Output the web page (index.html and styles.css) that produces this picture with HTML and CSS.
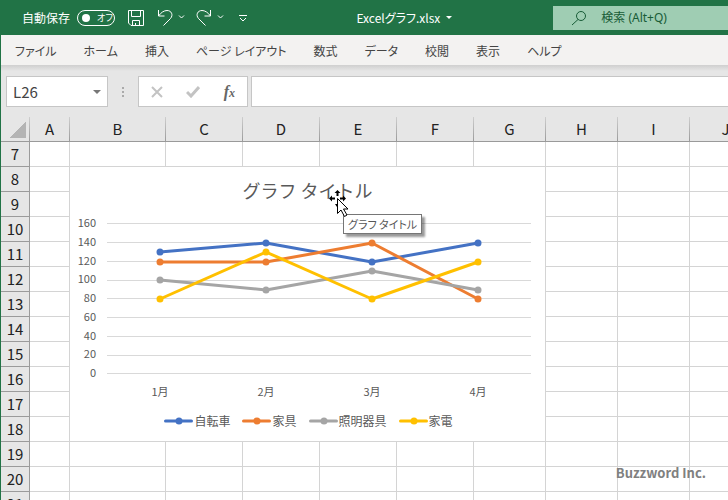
FILE: index.html
```html
<!DOCTYPE html>
<html lang="ja">
<head>
    <meta charset="UTF-8">
    <meta name="viewport" content="width=device-width, initial-scale=1.0">
    <title>Excelグラフ.xlsx</title>
    <link rel="stylesheet" href="styles.css">
</head>
<body>
    <header class="title-bar">
        <div class="quick-access">
            <label class="autosave">
                <span>自動保存</span>
                <input type="checkbox" class="autosave-input">
                <span class="switch"><span class="knob"></span>オフ</span>
            </label>
            <button class="save" aria-label="上書き保存">
                <svg width="16" height="16" viewBox="0 0 16 16"><path d="M.5.5h15v15H3L.5 13zM3.5.5v6h9v-6M4.5 15.5v-5h7v5M7.5 13v2"/></svg>
            </button>
            <button class="undo" aria-label="元に戻す">
                <svg width="28" height="18" viewBox="0 0 28 18"><path d="M1.5 1v6h6M1.5 7C4 3.5 7 1.5 10 1.5c4.5 0 6.5 4.5 3.5 8L6.5 16.5"/><path d="M22 6.5l2.5 2.5L27 6.5"/></svg>
            </button>
            <button class="redo" aria-label="やり直し">
                <svg width="28" height="18" viewBox="0 0 28 18"><path d="M14.5 1v6h-6M14.5 7C12 3.5 9 1.5 6 1.5c-4.5 0-6.5 4.5-3.5 8L9.5 16.5"/><path d="M22 6.5l2.5 2.5L27 6.5"/></svg>
            </button>
            <button class="more" aria-label="クイック アクセス ツール バーのユーザー設定">
                <svg width="8" height="8" viewBox="0 0 8 8"><path d="M0 1.5h8M1 4l3 3 3-3"/></svg>
            </button>
        </div>
        <button class="file-name">Excelグラフ.xlsx<span class="arrow-down"></span></button>
        <label class="search">
            <svg width="16" height="16" viewBox="0 0 16 16"><circle cx="10" cy="6" r="4.5"/><path d="M7 9.5L1 15"/></svg>
            <input type="text" placeholder="検索 (Alt+Q)">
        </label>
    </header>
    <nav class="tabs">
        <a href="#">ファイル</a>
        <a href="#">ホーム</a>
        <a href="#">挿入</a>
        <a href="#">ページ レイアウト</a>
        <a href="#">数式</a>
        <a href="#">データ</a>
        <a href="#">校閲</a>
        <a href="#">表示</a>
        <a href="#">ヘルプ</a>
    </nav>
    <div class="formula-bar">
        <div class="name-box">
            <input type="text" value="L26" aria-label="名前ボックス">
            <button aria-label="名前の一覧"><span class="arrow-down"></span></button>
        </div>
        <div class="grip"><i></i><i></i><i></i></div>
        <div class="formula-buttons">
            <button aria-label="キャンセル"><svg width="12" height="12" viewBox="0 0 12 12"><path d="M1 1l10 10M11 1L1 11"/></svg></button>
            <button aria-label="入力"><svg width="14" height="12" viewBox="0 0 14 12"><path class="check" d="M1 6l4 4 8-9"/></svg></button>
            <button aria-label="関数の挿入" class="fx">f<small>x</small></button>
        </div>
        <input type="text" class="formula-input" aria-label="数式バー">
    </div>
    <main class="sheet">
        <table class="grid">
            <colgroup>
                <col class="col-head"><col class="col-a"><col class="col-b">
                <col class="col-mid"><col class="col-mid"><col class="col-mid"><col class="col-mid">
                <col class="col-std"><col class="col-std"><col class="col-std"><col class="col-std">
            </colgroup>
            <thead>
                <tr><th class="corner"></th><th>A</th><th>B</th><th>C</th><th>D</th><th>E</th><th>F</th><th>G</th><th>H</th><th>I</th><th>J</th></tr>
            </thead>
            <tbody id="rows"></tbody>
        </table>

        <section class="chart">
            <h2 class="chart-title">グラフ タイトル</h2>
            <svg class="plot" viewBox="0 0 475 190" role="img" aria-label="折れ線グラフ">
                <path class="lines" d="M37 16.5h424M37 35.5h424M37 54.5h424M37 73.5h424M37 91.5h424M37 110.5h424M37 129.5h424M37 148.5h424M37 166.5h424"/>
                <g class="y-axis">
                    <text x="26" y="20">160</text>
                    <text x="26" y="39">140</text>
                    <text x="26" y="58">120</text>
                    <text x="26" y="76">100</text>
                    <text x="26" y="95">80</text>
                    <text x="26" y="114">60</text>
                    <text x="26" y="133">40</text>
                    <text x="26" y="151">20</text>
                    <text x="26" y="170">0</text>
                </g>
                <g class="x-axis">
                    <text x="90" y="189">1月</text>
                    <text x="196" y="189">2月</text>
                    <text x="302" y="189">3月</text>
                    <text x="408" y="189">4月</text>
                </g>
                <g id="series"></g>
            </svg>
            <ul class="legend" id="legend"></ul>
        </section>

        <div class="tooltip" role="tooltip">グラフ タイトル</div>
        <svg class="cursor" width="20" height="28" viewBox="0 0 20 28">
            <path d="M8.5 0L11.5 3H9.5v3h-2V3h-2zM0 8.500L3 5.5v2h3v2H3v2zM17 8.500L14 5.5v2h-3v2h3v2zM6 14h2v3z"/>
            <path class="pointer" d="M8.5 8.5v15l3.5-3.5 3.5 6.5 2.5-1.5-3.500-6h4.500z"/>
        </svg>
        <p class="credit">Buzzword Inc.</p>
    </main>
    <script>
        var series = [
            { name: '自転車', color: '#4472c4', values: [130, 140, 120, 140] },
            { name: '家具', color: '#ed7d31', values: [120, 120, 140, 80] },
            { name: '照明器具', color: '#a5a5a5', values: [100, 90, 110, 90] },
            { name: '家電', color: '#ffc000', values: [80, 130, 80, 120] }
        ];

        // 7行目から表示
        var rows = '';
        for (var r = 7; r <= 30; r++) {
            rows += '<tr><th>' + r + '</th>' + '<td></td>'.repeat(10) + '</tr>';
        }
        document.getElementById('rows').innerHTML = rows;

        var lines = '';
        var items = '';
        series.forEach(function(s) {
            var points = s.values.map(function(v, i) {
                return [90 + i * 106, Math.round(167 - v * 150 / 160)];
            });
            lines += '<polyline points="' + points.join(' ') + '" stroke="' + s.color + '"/>';
            points.forEach(function(p) {
                lines += '<circle cx="' + p[0] + '" cy="' + p[1] + '" r="3.5" fill="' + s.color + '"/>';
            });
            items += '<li><svg width="29" height="8" viewBox="0 0 29 8">' +
                '<path d="M1.5 4h26" stroke="' + s.color + '"/>' +
                '<circle cx="15" cy="4" r="3.5" fill="' + s.color + '"/></svg>' + s.name + '</li>';
        });
        document.getElementById('series').innerHTML = lines;
        document.getElementById('legend').innerHTML = items;
    </script>
</body>
</html>
```
FILE: styles.css
```css
* {
    box-sizing: border-box;
}
body {
    margin: 0;
    height: 100vh;
    display: flex;
    flex-direction: column;
    overflow: hidden;
    background-color: #e6e6e6;
    border-left: 1px solid #217346;
    font-family: "Noto Sans CJK JP", sans-serif;
    font-size: 12px;
    color: #444;
}
button, input {
    font: inherit;
    color: inherit;
    border: none;
    background: none;
    padding: 0;
    margin: 0;
}
input {
    min-width: 0;
}
svg {
    display: block;
    fill: none;
}

/* タイトルバー */
.title-bar {
    display: grid;
    grid-template-columns: 1fr auto 24%;
    align-items: center;
    height: 35px;
    margin-left: -1px;
    background-color: #217346;
    color: #fff;
    font-feature-settings: "palt";
    white-space: nowrap;
}
.quick-access {
    display: flex;
    align-items: center;
    padding-left: 22px;
}
.quick-access svg {
    stroke: #fff;
}
.autosave {
    display: flex;
    align-items: center;
    gap: 7px;
}
.autosave-input {
    position: absolute;
    opacity: 0;
}
.switch {
    display: flex;
    align-items: center;
    gap: 7px;
    width: 38px;
    height: 16px;
    padding-left: 4px;
    border: 1px solid #fff;
    border-radius: 8px;
    font-size: 9px;
}
.knob {
    width: 8px;
    height: 8px;
    border-radius: 50%;
    background-color: #fff;
}
.save, .undo {
    margin-left: 13px;
}
.redo {
    margin-left: 11px;
}
.more {
    margin-left: 15px;
}
.arrow-down {
    display: inline-block;
    border: 3px solid transparent;
    border-top-color: currentColor;
    border-bottom: none;
}
.file-name {
    display: flex;
    align-items: center;
    gap: 6px;
    margin-right: 101px;
}
.search {
    display: flex;
    align-items: center;
    gap: 14px;
    height: 24px;
    padding-left: 18px;
    background-color: #9fcdb3;
    color: #185c37;
    font-family: "Noto Sans", "Noto Sans CJK JP", sans-serif;
}
.search svg {
    stroke: #185c37;
}
.search input {
    flex: 1;
}
.search input::placeholder {
    color: #185c37;
    opacity: 1;
}

/* リボンのタブ */
.tabs {
    display: flex;
    align-items: center;
    gap: 27px;
    height: 30px;
    padding-left: 14px;
    background-color: #f3f2f1;
    font-feature-settings: "palt";
    white-space: nowrap;
}
.tabs a {
    color: #444;
    text-decoration: none;
}

/* 数式バー */
.formula-bar {
    display: flex;
    height: 52px;
    padding: 11px 0 10px 5px;
    background: linear-gradient(#cfcfcf, #e6e6e6 6px);
}
.name-box {
    display: flex;
    align-items: center;
    width: 102px;
    padding: 0 6px;
    border: 1px solid #c6c6c6;
    background-color: #fff;
}
.name-box input {
    flex: 1;
    font-size: 15px;
}
.name-box button {
    display: flex;
}
.name-box .arrow-down {
    border-width: 4px;
    border-bottom: none;
    color: #777;
}
.grip {
    display: flex;
    flex-direction: column;
    align-items: center;
    justify-content: center;
    gap: 2px;
    width: 30px;
}
.grip i {
    width: 2px;
    height: 2px;
    background-color: #aaa;
}
.formula-buttons {
    display: flex;
    align-items: center;
    justify-content: space-between;
    width: 110px;
    margin-right: 3px;
    padding: 0 12px;
    border: 1px solid #c6c6c6;
    background-color: #fff;
}
.formula-buttons svg {
    stroke: #c3c3c3;
    stroke-width: 2;
}
.formula-buttons .check {
    stroke-width: 3;
}
.fx {
    font: italic bold 16px "Liberation Serif", serif;
    color: #666;
}
.fx small {
    font-size: 12px;
}
.formula-input {
    flex: 1;
    border: 1px solid #c6c6c6;
    border-right: none;
    background-color: #fff;
}

/* シート */
.sheet {
    position: relative;
    flex: 1;
    min-height: 0;
    overflow: hidden;
}
.grid {
    table-layout: fixed;
    width: 761px;
    border-collapse: separate;
    border-spacing: 0;
    background-color: #fff;
}
.col-head {
    width: 29px;
}
.col-a {
    width: 40px;
}
.col-b {
    width: 96px;
}
.col-mid {
    width: 77px;
}
.col-std {
    width: 72px;
}
.grid th, .grid td {
    height: 25px;
    padding: 0;
    border-right: 1px solid #d4d4d4;
    border-bottom: 1px solid #d4d4d4;
}
.grid th {
    background-color: #e6e6e6;
    border-color: #9b9b9b;
    color: #222;
    font-size: 15px;
    font-weight: normal;
    line-height: 24px;
}
.grid thead th {
    border-right: 1px solid;
    border-image: linear-gradient(#d0d0d0, #999) 1;
    border-bottom: 1px solid #999;
    border-left: none;
    border-top: none;
    line-height: 22px;
}
.grid .corner {
    background: linear-gradient(135deg, transparent 50%, #b4b4b4 50%) 8px 4px / 17px 17px no-repeat #e6e6e6;
}

/* グラフ */
.chart {
    position: absolute;
    left: 69px;
    top: 50px;
    width: 475px;
    height: 274px;
    background-color: #fff;
    color: #595959;
}
.chart-title {
    margin: 0;
    padding: 8px 0 2px;
    text-align: center;
    font-size: 18px;
    font-weight: normal;
    line-height: 30px;
}
.plot {
    width: 100%;
}
.plot text {
    fill: #595959;
    font-size: 11px;
}
.lines {
    stroke: #d9d9d9;
    shape-rendering: crispEdges;
}
.y-axis {
    text-anchor: end;
}
.x-axis {
    text-anchor: middle;
}
.plot polyline, .legend path {
    stroke-width: 3;
    stroke-linecap: round;
    stroke-linejoin: round;
}
.legend {
    display: flex;
    justify-content: center;
    gap: 12px;
    margin: 0;
    padding: 14px 0 0 2px;
    list-style: none;
    line-height: 20px;
}
.legend li {
    display: flex;
    align-items: center;
    gap: 1px;
}

/* グラフの上に重なるもの */
.tooltip {
    position: absolute;
    left: 342px;
    top: 97px;
    padding: 0 4px;
    border: 1px solid #767676;
    background-color: #fff;
    box-shadow: 3px 3px 2px rgba(0, 0, 0, 0.4);
    color: #575757;
    font-size: 11px;
    line-height: 18px;
    font-feature-settings: "palt";
}
.cursor {
    position: absolute;
    left: 328px;
    top: 73px;
    fill: #000;
}
.cursor .pointer {
    fill: #fff;
    stroke: #000;
}
.credit {
    position: absolute;
    right: 22px;
    bottom: 17px;
    margin: 0;
    color: #808080;
    font-size: 13px;
    font-weight: bold;
    line-height: 20px;
}
```
